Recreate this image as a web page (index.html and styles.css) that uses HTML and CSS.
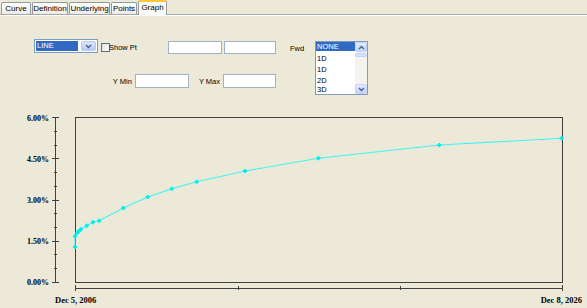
FILE: index.html
```html
<!DOCTYPE html>
<html lang="en">
<head>
  <meta charset="UTF-8" />
  <title>Curve | Graph</title>
  <link rel="stylesheet" href="styles.css">
</head>
<body>

<!-- Tabs -->
<div class="tabs">
  <div class="tab">Curve</div>
  <div class="tab">Definition</div>
  <div class="tab">Underlying</div>
  <div class="tab">Points</div>
  <div class="tab active">Graph</div>
</div>

<div class="panel">
  <div class="controls">
    <div class="combo">
      <span class="combo-value">LINE</span>
      <span class="combo-btn">
        <svg width="7" height="5" viewBox="0 0 7 5"><path d="M1 1 L3.5 3.5 L6 1" fill="none" stroke="#4d6185" stroke-width="1.4"/></svg>
      </span>
    </div>

    <label class="check"><span class="box"></span>Show Pt</label>

    <input type="text" class="field field-a">
    <input type="text" class="field field-b">

    <span class="fwd">Fwd</span>

    <div class="listbox">
      <div class="list-items">
        <div class="item selected">NONE</div>
        <div class="item">1D</div>
        <div class="item">1D</div>
        <div class="item">2D</div>
        <div class="item">3D</div>
      </div>
      <div class="scrollbar">
        <div class="sb-btn">
          <svg width="7" height="5" viewBox="0 0 7 5"><path d="M1 4 L3.5 1.5 L6 4" fill="none" stroke="#4d6185" stroke-width="1.4"/></svg>
        </div>
        <div class="sb-thumb"></div>
        <div class="sb-track"></div>
        <div class="sb-btn">
          <svg width="7" height="5" viewBox="0 0 7 5"><path d="M1 1 L3.5 3.5 L6 1" fill="none" stroke="#4d6185" stroke-width="1.4"/></svg>
        </div>
      </div>
    </div>

    <div class="range-row">
      <span class="range-label">Y Min</span>
      <input type="text" class="field">
      <span class="range-label gap">Y Max</span>
      <input type="text" class="field">
    </div>
  </div>

  <!-- Chart -->
  <svg class="chart" width="587" height="220" viewBox="0 88 587 220">
    <g stroke="#404040" stroke-width="1" fill="none">
      <line x1="55.5" y1="117.5" x2="55.5" y2="282.5"/>
      <path d="M52 117.5h7 M52 158.5h7 M52 200.5h7 M52 241.5h7 M52 282.5h7"/>
      <path d="M54 131.5h3 M54 145.5h3 M54 172.5h3 M54 186.5h3 M54 213.5h3 M54 227.5h3 M54 254.5h3 M54 268.5h3"/>
      <rect x="75.5" y="117.5" width="487" height="165"/>
      <line x1="75.5" y1="288.5" x2="562.5" y2="288.5"/>
      <path d="M75.5 285v6 M562.5 285v6 M238.5 286v4 M400.5 286v4"/>
    </g>

    <g class="axis-y">
      <text x="49" y="121">6.00%</text>
      <text x="49" y="162">4.50%</text>
      <text x="49" y="203">3.00%</text>
      <text x="49" y="244">1.50%</text>
      <text x="49" y="285">0.00%</text>
    </g>
    <text class="axis-x" x="55" y="302.5">Dec 5, 2006</text>
    <text class="axis-x end" x="582" y="302.5">Dec 8, 2026</text>

    <polyline class="curve" points="75,247 75,236.3 77.3,232.7 79,231 81,229.3 86.7,225.7 93,222.3 99.3,220.7 123.3,208 147.7,197 171.7,188.7 196.7,181.7 245,171 318.3,158.3 439.3,145 561.7,138.3"/>
    <path class="marks" d="M73 247h4 M75 245v4 M73 236.3h4 M75 234.3v4 M75.3 232.7h4 M77.3 230.7v4 M77 231h4 M79 229v4 M79 229.3h4 M81 227.3v4 M84.7 225.7h4 M86.7 223.7v4 M91 222.3h4 M93 220.3v4 M97.3 220.7h4 M99.3 218.7v4 M121.3 208h4 M123.3 206v4 M145.7 197h4 M147.7 195v4 M169.7 188.7h4 M171.7 186.7v4 M194.7 181.7h4 M196.7 179.7v4 M243 171h4 M245 169v4 M316.3 158.3h4 M318.3 156.3v4 M437.3 145h4 M439.3 143v4 M559.7 138.3h4 M561.7 136.3v4"/>
  </svg>
</div>

</body>
</html>
```

FILE: styles.css
```css
body {
  margin: 0;
  background: #ece9d8;
  font-family: 'Liberation Sans', Arial, sans-serif;
  font-size: 7.5px;
  color: #000;
  overflow: hidden;
}

/* Tabs */
.tabs {
  display: flex;
  align-items: flex-end;
  height: 14px;
  border-bottom: 1px solid #a7a9a6;
}

.tab {
  box-sizing: border-box;
  height: 12px;
  margin-left: 1px;
  border: 1px solid #919b9c;
  border-bottom: none;
  border-radius: 2px 2px 0 0;
  background: linear-gradient(to bottom, #ffffff, #ecebe6);
  font-size: 8px;
  line-height: 11px;
  text-align: center;
}

.tab:nth-child(1) { width: 30px; }
.tab:nth-child(2) { width: 36px; }
.tab:nth-child(3) { width: 41px; }
.tab:nth-child(4) { width: 26px; }

.tab.active {
  width: 29px;
  height: 15px;
  margin-bottom: -1px;
  border-top: 2px solid #ffc83c;
  background: #fbfbf8;
  line-height: 12px;
}

.panel {
  border-top: 1px solid #ffffff;
  padding-top: 24px;
}

/* Controls */
.controls {
  display: grid;
  grid-template-columns: 34px 64px 3px 67px 54px 2px 52px 14px 25px 53px;
  grid-template-rows: 14px 20px 14px;
}

.combo {
  grid-column: 2;
  grid-row: 1;
  box-sizing: border-box;
  display: flex;
  height: 14px;
  margin-top: -1px;
  padding: 1px;
  border: 1px solid #7f9db9;
  background: #fff;
}

.combo-value {
  flex: 1;
  margin-right: 3px;
  padding-left: 1px;
  background: #316ac5;
  color: #fff;
  line-height: 10px;
}

.combo-btn {
  width: 15px;
  display: flex;
  align-items: center;
  justify-content: center;
  border: 1px solid #b7caf5;
  border-radius: 2px;
  box-sizing: border-box;
  background: linear-gradient(to bottom, #dce6fd, #b9cbf6);
}

.check {
  grid-column: 4;
  grid-row: 1;
  display: flex;
  align-items: center;
}

.box {
  box-sizing: border-box;
  width: 9px;
  height: 9px;
  margin-right: -1px;
  border: 1px solid #5c6f86;
  background: linear-gradient(to bottom right, #e0e0da, #ffffff);
}

.field {
  box-sizing: border-box;
  height: 13px;
  margin: 1px 0 0;
  padding: 0;
  border: 1px solid #9fb2c7;
  background: #fff;
}

.field-a {
  grid-column: 5;
  grid-row: 1;
  width: 54px;
}

.field-b {
  grid-column: 7;
  grid-row: 1;
  width: 52px;
}

.fwd {
  grid-column: 9;
  grid-row: 1;
  align-self: center;
  margin-top: 2px;
}

/* Listbox */
.listbox {
  grid-column: 10;
  grid-row: 1 / span 3;
  box-sizing: border-box;
  display: flex;
  width: 53px;
  height: 54px;
  margin-top: 1px;
  border: 1px solid #7f9db9;
  background: #fff;
}

.list-items {
  flex: 1;
  overflow: hidden;
}

.item {
  height: 11px;
  line-height: 11px;
  padding-left: 1px;
}

.item:last-child {
  height: 8px;
  line-height: 8px;
}

.item.selected {
  height: 9px;
  line-height: 9px;
  margin-bottom: 2px;
  background: #316ac5;
  color: #fff;
}

.scrollbar {
  width: 12px;
  display: flex;
  flex-direction: column;
  background: #f4f3ee;
}

.sb-btn {
  box-sizing: border-box;
  height: 10px;
  display: flex;
  align-items: center;
  justify-content: center;
  border: 1px solid #c3d3fd;
  border-radius: 2px;
  background: linear-gradient(to bottom, #e4ebfd, #c1d3fb);
}

.sb-thumb {
  height: 4px;
  margin: 1px 0 0;
  border: 1px solid #c3d3fd;
  border-radius: 2px;
  box-sizing: border-box;
  background: #d6e2fd;
}

.sb-track {
  flex: 1;
}

.range-row {
  grid-column: 2 / 8;
  grid-row: 3;
  display: flex;
  align-items: center;
  justify-content: flex-end;
}

.range-row .field {
  width: 54px;
  height: 14px;
  margin: 0 0 0 3px;
}

.range-row .field:last-child {
  width: 53px;
}

.range-label.gap {
  margin-left: 10px;
}

/* Chart */
.chart {
  display: block;
}

.chart text {
  font-family: 'Liberation Serif', 'Times New Roman', serif;
  font-weight: bold;
  fill: #000;
}

.axis-y text {
  font-size: 8px;
  text-anchor: end;
}

.axis-x {
  font-size: 8.5px;
}

.axis-x.end {
  text-anchor: end;
}

.curve {
  fill: none;
  stroke: #3ff6f0;
  stroke-width: 1.1;
}

.marks {
  fill: none;
  stroke: #00eef0;
  stroke-width: 2;
}
```
